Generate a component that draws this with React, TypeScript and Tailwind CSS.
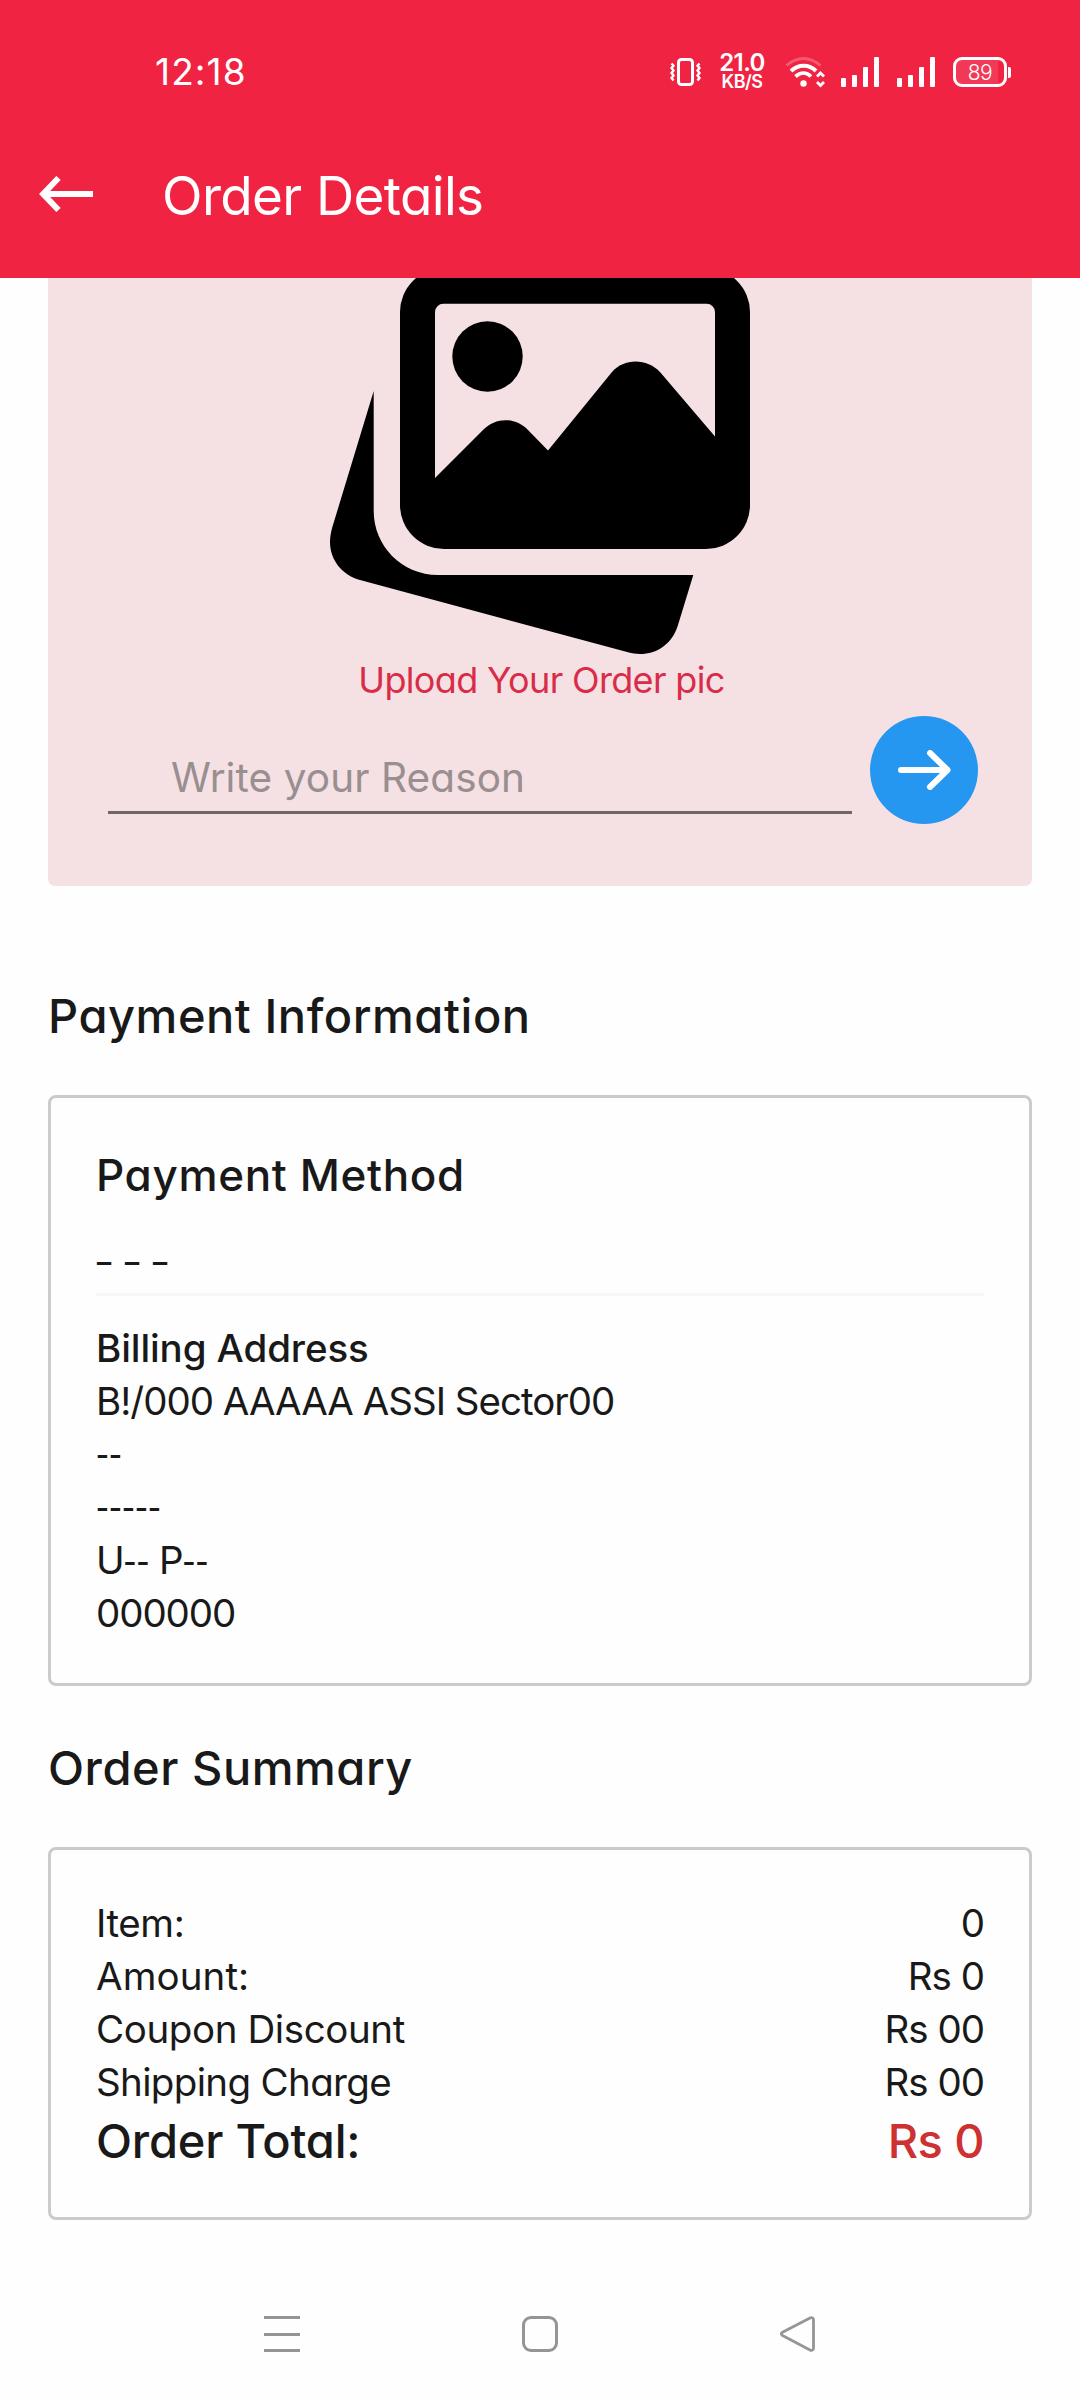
import type { ReactNode } from 'react';

function VibrateIcon() {
  return (
    <svg className="h-[28px] w-[31px]" viewBox="0 0 31 28" fill="none" stroke="white">
      <rect x="8.5" y="1.5" width="14" height="25" rx="3" strokeWidth="3" />
      <path d="M1.5 5.5l2 2.2-2 2.3 2 2.5-2 2.5 2 2.5-2 2.5 2 2.5M29.5 5.5l-2 2.2 2 2.3-2 2.5 2 2.5-2 2.5 2 2.5-2 2.5" strokeWidth="2.4" />
    </svg>
  );
}

function WifiIcon() {
  return (
    <svg className="h-[32px] w-[40px]" viewBox="0 0 40 32" fill="none" stroke="white">
      <path d="M1.5 9.500C12 0 25 0 35.500 9.500" strokeWidth="3" opacity="0.25" />
      <path d="M6 15C13.500 8 24 8 31 15" strokeWidth="4" />
      <path d="M10.500 20.500C15.500 16 21.500 16 26 20.500" strokeWidth="3.800" />
      <circle cx="18.500" cy="27.500" r="3.200" fill="white" stroke="none" />
      <path d="M32 20.500L35.500 17L39 20.500M32 26L35.500 29.500L39 26" strokeWidth="2.800" />
    </svg>
  );
}

function SignalIcon() {
  return (
    <div className="flex h-[30px] items-end gap-[6px]">
      <i className="h-[9px] w-[5px] rounded-[1px] bg-white" />
      <i className="h-[12px] w-[5px] rounded-[1px] bg-white" />
      <i className="h-[20px] w-[5px] rounded-[1px] bg-white" />
      <i className="h-[30px] w-[5px] rounded-[1px] bg-white" />
    </div>
  );
}

function Battery() {
  return (
    <div className="flex items-center">
      <div className="flex h-[30px] w-[54px] items-center justify-center rounded-[9px] border-[3px] border-white bg-linear-to-r from-white/10 from-87% to-transparent to-87%">
        <span className="text-[21px] leading-none font-[350] tracking-[-0.5px]">89</span>
      </div>
      <i className="ml-px h-[11px] w-[3px] rounded-r-[2px] bg-white" />
    </div>
  );
}

function StatusBar() {
  return (
    <div className="flex h-[144px] items-center pr-[69px] pl-[155px]">
      <span className="mb-[2px] text-[37px] leading-none font-normal tracking-[1.1px]">12:18</span>
      <div className="ml-auto flex items-center">
        <VibrateIcon />
        <div className="ml-[17px] flex w-[48px] flex-col items-center font-semibold">
          <span className="text-[24px] leading-[20px] tracking-[-0.6px]">21.0</span>
          <span className="text-[18px] leading-[18px] tracking-[-0.5px]">KB/S</span>
        </div>
        <div className="ml-[19px]"><WifiIcon /></div>
        <div className="ml-[16px]"><SignalIcon /></div>
        <div className="ml-[18px]"><SignalIcon /></div>
        <div className="ml-[18px]"><Battery /></div>
      </div>
    </div>
  );
}

function Header() {
  return (
    <header className="h-[278px] bg-[#f02342] text-white">
      <StatusBar />
      <div className="flex h-[102px] items-center pl-[39px]">
        <svg className="mb-[2px] h-[36px] w-[54px]" viewBox="0 0 54 36" fill="none" stroke="white" strokeWidth="6">
          <path d="M5 18H54M19.500 2L4.200 18L19.500 34" />
        </svg>
        <h1 className="mt-px ml-[69px] text-[53px] leading-[64px] font-normal tracking-[-0.65px]">Order Details</h1>
      </div>
    </header>
  );
}

function PhotosIcon() {
  return (
    <svg className="h-[376px] w-[420px]" viewBox="330 278 420 376">
      <path
        fillRule="evenodd"
        d="M444 268H706A44 44 0 0 1 750 312V505A44 44 0 0 1 706 549H444A44 44 0 0 1 400 505V312A44 44 0 0 1 444 268ZM435 312V478L483 430C496 417 515 417 528 430L548 450.500L612 372C624 358 647 358 660 372L715 436.500V312A8.300 8.300 0 0 0 706.700 303.700H443.300A8.300 8.300 0 0 0 435 312Z"
      />
      <circle cx="487.500" cy="356.500" r="35.200" />
      <path d="M373.700 391V511C373.700 546 402 575 438 575H693.300L677.700 626C672 644 657 654 640 654C636 654 632 653.500 628 652.300L360 580C342 575 330 560 330 542C330 537 331 532 332.300 527.300Z" />
    </svg>
  );
}

function UploadCard() {
  return (
    <section className="flex h-[608px] flex-col items-center rounded-b-[7px] bg-[#f5e1e4]">
      <PhotosIcon />
      <p className="pl-[3px] text-[36px] leading-[52px] font-[375] tracking-[-0.65px] text-[#d92c48]">Upload Your Order pic</p>
      <div className="flex w-full items-start pt-[10px] pl-[60px]">
        <div className="flex h-[98px] w-[744px] items-end border-b-[3px] border-[#706668] pl-[63px]">
          <span className="text-[40.5px] leading-[66px] font-[375] tracking-[0.1px] text-[#998e90]">Write your Reason</span>
        </div>
        <button className="ml-[18px] flex size-[108px] items-center justify-center rounded-full bg-[#2697f0]">
          <svg className="h-[40px] w-[54px]" viewBox="0 0 54 40" fill="none" stroke="white" strokeWidth="6" strokeLinecap="round" strokeLinejoin="round">
            <path d="M4 20H50.500M33 3L50.500 20L33 37" />
          </svg>
        </button>
      </div>
    </section>
  );
}

function Panel({ title, children }: { title: string; children: ReactNode }) {
  return (
    <section>
      <h2 className="text-[47px] leading-[60px] font-medium tracking-[0.55px]">{title}</h2>
      <div className="mt-[49px] rounded-[8px] border-[3px] border-[#cbcbcb] px-[45px] pt-[47px] pb-[44px]">{children}</div>
    </section>
  );
}

function Dashes({ children }: { children: string }) {
  return <span className="font-['Liberation_Sans',sans-serif] tracking-[0.15px]">{children}</span>;
}

const charges = [
  { label: 'Item:', value: '0', spacing: 'tracking-[-0.4px]' },
  { label: 'Amount:', value: 'Rs 0', spacing: 'tracking-[0.1px]' },
  { label: 'Coupon Discount', value: 'Rs 00', spacing: 'tracking-[-0.4px]' },
  { label: 'Shipping Charge', value: 'Rs 00', spacing: 'tracking-[-0.65px]' },
];

export default function App() {
  return (
    <div className="h-[2400px] w-[1080px] overflow-hidden bg-[#fefefe] font-['Inter',sans-serif] text-[#191919] [font-feature-settings:'cv11']">
      <Header />
      <main className="px-[48px]">
        <UploadCard />
        <div className="mt-[100px]">
          <Panel title="Payment Information">
            <h3 className="text-[44px] leading-[60px] font-medium tracking-[0.65px]">Payment Method</h3>
            <p className="mt-[31px] h-[52px] font-['Liberation_Sans',sans-serif] text-[29px] leading-[52px] font-bold [word-spacing:3.800px]">– – –</p>
            <hr className="mt-[5px] h-[3px] border-0 bg-[#f7f7f7]" />
            <div className="mt-[26px] mb-[-1px] text-[38.5px] leading-[53px] font-[375]">
              <p className="h-[53px] font-medium tracking-[-0.1px]">Billing Address</p>
              <p className="h-[53px] tracking-[-1px]">B!/000 AAAAA ASSI Sector00</p>
              <p className="h-[53px] leading-[51px]"><Dashes>--</Dashes></p>
              <p className="h-[53px] leading-[51px]"><Dashes>-----</Dashes></p>
              <p className="h-[53px] tracking-[-1.2px]">U<Dashes>--</Dashes> P<Dashes>--</Dashes></p>
              <p className="h-[53px] tracking-[-1.1px]">000000</p>
            </div>
          </Panel>
        </div>
        <div className="mt-[52px]">
          <Panel title="Order Summary">
            {charges.map(({ label, value, spacing }) => (
              <div key={label} className="flex justify-between text-[38.5px] leading-[53px] font-[375]">
                <span className={spacing}>{label}</span>
                <span className="tracking-[-1px]">{value}</span>
              </div>
            ))}
            <div className="flex justify-between text-[47px] leading-[64px] font-medium">
              <span className="tracking-[-0.2px]">Order Total:</span>
              <span className="tracking-[-0.6px] text-[#cd3131]">Rs 0</span>
            </div>
          </Panel>
        </div>
      </main>
      <nav className="mt-[96px] flex justify-between px-[264px]">
        <div className="flex size-[36px] flex-col justify-between">
          <i className="h-[3px] bg-[#959595]" />
          <i className="h-[3px] bg-[#959595]" />
          <i className="h-[3px] bg-[#959595]" />
        </div>
        <div className="size-[36px] rounded-[9px] border-[3px] border-[#959595]" />
        <svg className="size-[36px]" viewBox="0 0 36 36" fill="none" stroke="#959595" strokeWidth="2.800" strokeLinejoin="round">
          <path d="M2.500 16.200L30 2C32 1 33.500 2 33.500 4V32C33.500 34 32 35 30 34L2.500 19.500C1 18.500 1 17 2.500 16.200Z" />
        </svg>
      </nav>
    </div>
  );
}
